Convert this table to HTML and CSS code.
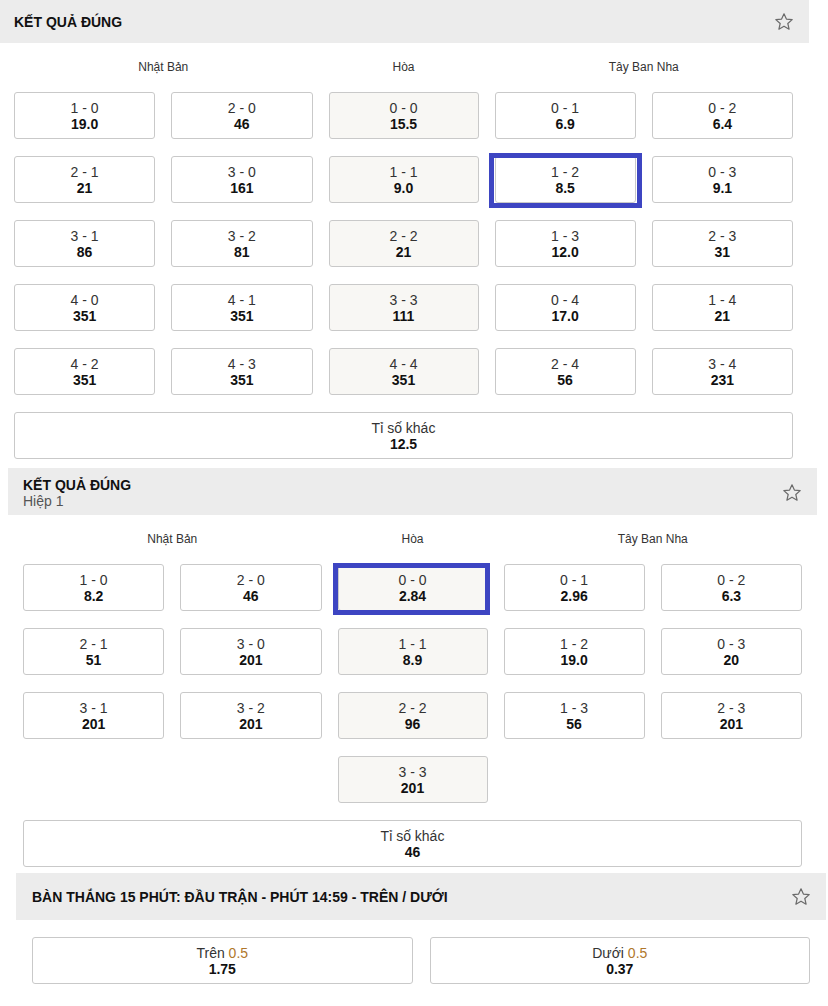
FILE: index.html
```html
<!DOCTYPE html>
<html lang="vi">
<head>
<meta charset="utf-8">
<title>Kết quả đúng</title>
<link rel="stylesheet" href="styles.css">
</head>
<body>
<svg width="0" height="0" class="defs" aria-hidden="true">
  <defs>
    <symbol id="star" viewBox="0 0 20 20">
      <path d="M10 1.8 L12.4 7.1 L18.2 7.6 L13.8 11.5 L15.1 17.2 L10 14.2 L4.9 17.2 L6.2 11.5 L1.8 7.6 L7.6 7.1 Z" fill="none" stroke="#6a6a6a" stroke-width="1.2" stroke-linejoin="round"/>
    </symbol>
  </defs>
</svg>

<section class="market m1">
  <div class="mhead">
    <div class="titles"><div class="title">KẾT QUẢ ĐÚNG</div></div>
    <svg class="star"><use href="#star"/></svg>
  </div>
  <div class="grid5">
    <div class="lbl span2">Nhật Bản</div>
    <div class="lbl">Hòa</div>
    <div class="lbl span2">Tây Ban Nha</div>

    <div class="btn"><span class="sc">1 - 0</span><b>19.0</b></div>
    <div class="btn"><span class="sc">2 - 0</span><b>46</b></div>
    <div class="btn draw"><span class="sc">0 - 0</span><b>15.5</b></div>
    <div class="btn"><span class="sc">0 - 1</span><b>6.9</b></div>
    <div class="btn"><span class="sc">0 - 2</span><b>6.4</b></div>

    <div class="btn"><span class="sc">2 - 1</span><b>21</b></div>
    <div class="btn"><span class="sc">3 - 0</span><b>161</b></div>
    <div class="btn draw"><span class="sc">1 - 1</span><b>9.0</b></div>
    <div class="btn sel"><span class="sc">1 - 2</span><b>8.5</b></div>
    <div class="btn"><span class="sc">0 - 3</span><b>9.1</b></div>

    <div class="btn"><span class="sc">3 - 1</span><b>86</b></div>
    <div class="btn"><span class="sc">3 - 2</span><b>81</b></div>
    <div class="btn draw"><span class="sc">2 - 2</span><b>21</b></div>
    <div class="btn"><span class="sc">1 - 3</span><b>12.0</b></div>
    <div class="btn"><span class="sc">2 - 3</span><b>31</b></div>

    <div class="btn"><span class="sc">4 - 0</span><b>351</b></div>
    <div class="btn"><span class="sc">4 - 1</span><b>351</b></div>
    <div class="btn draw"><span class="sc">3 - 3</span><b>111</b></div>
    <div class="btn"><span class="sc">0 - 4</span><b>17.0</b></div>
    <div class="btn"><span class="sc">1 - 4</span><b>21</b></div>

    <div class="btn"><span class="sc">4 - 2</span><b>351</b></div>
    <div class="btn"><span class="sc">4 - 3</span><b>351</b></div>
    <div class="btn draw"><span class="sc">4 - 4</span><b>351</b></div>
    <div class="btn"><span class="sc">2 - 4</span><b>56</b></div>
    <div class="btn"><span class="sc">3 - 4</span><b>231</b></div>

    <div class="btn full"><span class="sc">Tỉ số khác</span><b>12.5</b></div>
  </div>
</section>

<section class="market m2">
  <div class="mhead tall">
    <div class="titles"><div class="title">KẾT QUẢ ĐÚNG</div><div class="sub">Hiệp 1</div></div>
    <svg class="star"><use href="#star"/></svg>
  </div>
  <div class="grid5">
    <div class="lbl span2">Nhật Bản</div>
    <div class="lbl">Hòa</div>
    <div class="lbl span2">Tây Ban Nha</div>

    <div class="btn"><span class="sc">1 - 0</span><b>8.2</b></div>
    <div class="btn"><span class="sc">2 - 0</span><b>46</b></div>
    <div class="btn draw sel sel2"><span class="sc">0 - 0</span><b>2.84</b></div>
    <div class="btn"><span class="sc">0 - 1</span><b>2.96</b></div>
    <div class="btn"><span class="sc">0 - 2</span><b>6.3</b></div>

    <div class="btn"><span class="sc">2 - 1</span><b>51</b></div>
    <div class="btn"><span class="sc">3 - 0</span><b>201</b></div>
    <div class="btn draw"><span class="sc">1 - 1</span><b>8.9</b></div>
    <div class="btn"><span class="sc">1 - 2</span><b>19.0</b></div>
    <div class="btn"><span class="sc">0 - 3</span><b>20</b></div>

    <div class="btn"><span class="sc">3 - 1</span><b>201</b></div>
    <div class="btn"><span class="sc">3 - 2</span><b>201</b></div>
    <div class="btn draw"><span class="sc">2 - 2</span><b>96</b></div>
    <div class="btn"><span class="sc">1 - 3</span><b>56</b></div>
    <div class="btn"><span class="sc">2 - 3</span><b>201</b></div>

    <div class="btn draw col3"><span class="sc">3 - 3</span><b>201</b></div>

    <div class="btn full"><span class="sc">Tỉ số khác</span><b>46</b></div>
  </div>
</section>

<section class="market m3">
  <div class="mhead">
    <div class="titles"><div class="title">BÀN THẮNG 15 PHÚT: ĐẦU TRẬN - PHÚT 14:59 - TRÊN / DƯỚI</div></div>
    <svg class="star"><use href="#star"/></svg>
  </div>
  <div class="grid2">
    <div class="btn"><span class="sc">Trên <em>0.5</em></span><b>1.75</b></div>
    <div class="btn"><span class="sc">Dưới <em>0.5</em></span><b>0.37</b></div>
  </div>
</section>
</body>
</html>
```

FILE: styles.css
```css
* { box-sizing: border-box; }

html, body {
  margin: 0;
  padding: 0;
  background: #fff;
}

body {
  font-family: "Liberation Sans", Arial, sans-serif;
  color: #222;
  width: 828px;
}

.defs {
  position: absolute;
  width: 0;
  height: 0;
  overflow: hidden;
}

.market {
  width: 810px;
}

.m1 { margin-left: 0; width: 809px; padding-bottom: 9px; }
.m2 { margin-left: 8px; width: 809px; padding-bottom: 6px; }
.m3 { margin-left: 16px; width: 810px; }

.mhead {
  background: #ececec;
  height: 43px;
  display: flex;
  align-items: center;
  justify-content: space-between;
  padding: 0 15px 0 15px;
}

.m1 .mhead { padding-left: 14px; }
.m3 .mhead { padding-left: 16px; height: 47px; }

.mhead.tall {
  height: 47px;
  align-items: flex-start;
  padding-top: 9px;
}

.mhead.tall .star { margin-top: 6px; }

.title {
  font-size: 14px;
  font-weight: bold;
  color: #111;
  line-height: 16px;
}

.sub {
  font-size: 14px;
  color: #555;
  line-height: 16px;
}

.star {
  width: 20px;
  height: 20px;
  flex: none;
}

.grid5 {
  display: grid;
  grid-template-columns: 1fr 1fr 150px 1fr 1fr;
  column-gap: 16px;
  row-gap: 17px;
  padding: 16px 15px 0 15px;
}

.m1 .grid5 { padding-left: 14px; padding-right: 16px; }

.lbl {
  font-size: 12px;
  line-height: 16px;
  text-align: center;
  color: #333;
}

.span2 { grid-column: span 2; }
.col3 { grid-column: 3; }
.full { grid-column: 1 / -1; }

.btn {
  position: relative;
  height: 47px;
  border: 1px solid #c9c9c9;
  border-radius: 3px;
  background: #fff;
  display: flex;
  flex-direction: column;
  align-items: center;
  justify-content: center;
  font-size: 14px;
  line-height: 16px;
  color: #222;
}

.btn .sc { color: #333; }
.btn b { font-weight: bold; color: #111; }
.btn em { font-style: normal; color: #b0772b; }

.btn.draw { background: #f8f7f4; }

.btn.sel::after {
  content: "";
  position: absolute;
  top: -4px;
  bottom: -6px;
  left: -7px;
  right: -7px;
  border: 5px solid #3d45c2;
  pointer-events: none;
}

.btn.sel2::after {
  top: -2px;
  bottom: -5px;
  left: -6px;
  right: -3px;
}

.grid2 {
  display: grid;
  grid-template-columns: 1fr 1fr;
  column-gap: 17px;
  padding: 17px 16px 0 16px;
}
```
